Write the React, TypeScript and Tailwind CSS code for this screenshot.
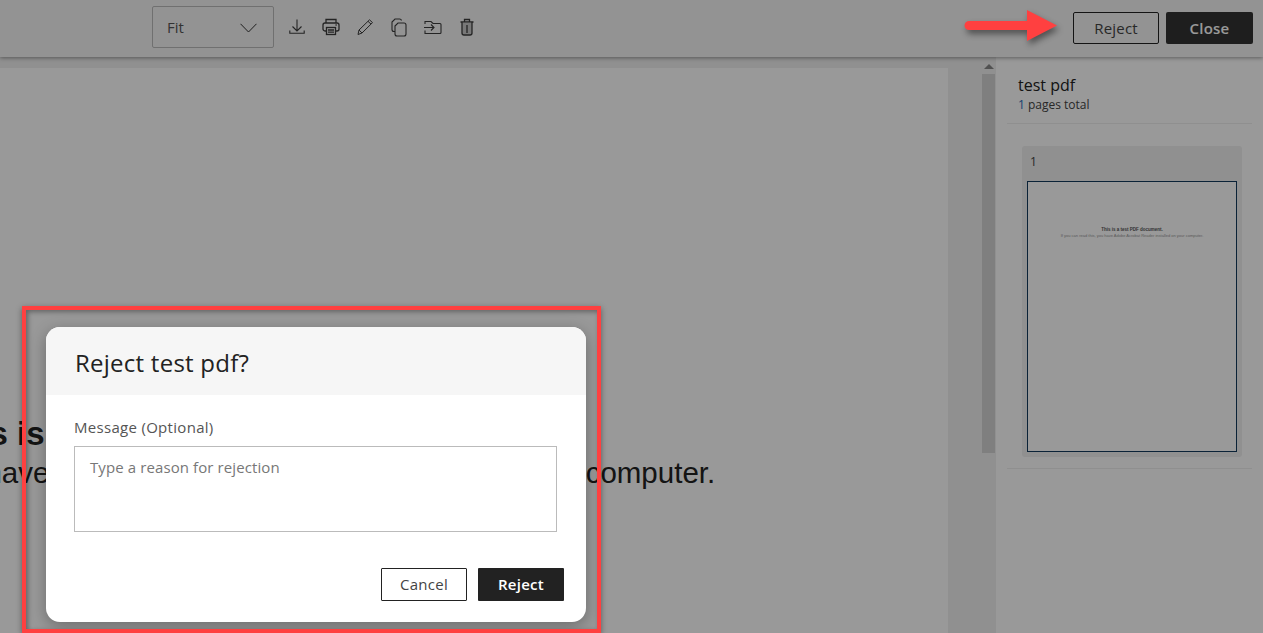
const iconClass = "w-[20px] h-[20px] text-[#3c3c3c]";

const DownloadIcon = () => (
  <svg viewBox="0 0 20 20" fill="none" stroke="currentColor" strokeWidth="1.1" className={iconClass}>
    <path d="M10 2.500v11M5.500 9.500l4.500 4.500 4.500-4.500" />
    <path d="M2.800 13.500v2.800h14.400v-2.800" />
  </svg>
);

const PrintIcon = () => (
  <svg viewBox="0 0 20 20" fill="none" stroke="currentColor" strokeWidth="1.3" className={iconClass}>
    <path d="M5 6V2.500h10V6" />
    <rect x="2" y="6" width="16" height="8" rx="2" />
    <rect x="5.500" y="10.500" width="9" height="7" fill="#f5f5f5" />
    <path d="M7 13h6M7 15.200h6" />
    <path d="M14.500 8h1.200" />
  </svg>
);

const PencilIcon = () => (
  <svg viewBox="0 0 20 20" fill="none" stroke="currentColor" strokeWidth="1" className={iconClass}>
    <path d="M3 17.500l1-4.500L14.500 2.800l3 2.800L7 16z" />
    <path d="M4 13l3 3M13 4.300l3 2.800" />
  </svg>
);

const CopyIcon = () => (
  <svg viewBox="0 0 20 20" fill="none" stroke="currentColor" strokeWidth="1.1" className={iconClass}>
    <path d="M6 14.500H5a2 2 0 0 1-2-2V5l3-3h4.500a2 2 0 0 1 2 1.500" />
    <path d="M6 9l3-3h6a2 2 0 0 1 2 2v9a2 2 0 0 1-2 2H8a2 2 0 0 1-2-2z" />
  </svg>
);

const MoveIcon = () => (
  <svg viewBox="0 0 20 20" fill="none" stroke="currentColor" strokeWidth="1.1" className={iconClass}>
    <path d="M2 7V4.500h6l2 2h7a1 1 0 0 1 1 1v8a1 1 0 0 1-1 1H2v-3" />
    <path d="M1 10.500h10M8 7.500l3 3-3 3" />
  </svg>
);

const TrashIcon = () => (
  <svg viewBox="0 0 20 20" fill="none" stroke="currentColor" strokeWidth="1.3" className={iconClass}>
    <path d="M3.500 5h13M7.500 5V2.500h5V5" />
    <path d="M5 5v11a2 2 0 0 0 2 2h6a2 2 0 0 0 2-2V5" fill="#9b9b9b" fillOpacity="0.5" />
    <path d="M10 8v8" />
  </svg>
);

const Chevron = () => (
  <svg viewBox="0 0 17 10" fill="none" stroke="#333" strokeWidth="1" className="w-[17px] h-[10px]">
    <path d="M0.500 0.800L8.500 9l8-8.200" />
  </svg>
);

const Arrow = () => (
  <svg viewBox="0 0 94 32" className="w-[94px] h-[32px] drop-shadow-[2px_4px_3px_rgba(0,0,0,0.45)]">
    <path d="M6 11h58V0l30 15.500L64 31V20H6a4.500 4.500 0 0 1 0-9z" fill="#ff4040" />
  </svg>
);

export default function App() {
  return (
    <div className="relative h-[633px] w-[1263px] overflow-hidden bg-white font-['Open_Sans','Liberation_Sans',sans-serif] text-[#333]">
      <header className="relative z-10 flex h-[57px] items-center bg-[#f5f5f5] pr-[10px] pb-[3px] pl-[152px] shadow-[0_1px_4px_rgba(0,0,0,0.4)]">
        <div className="flex h-[42px] w-[122px] items-center justify-between rounded-[2px] border border-[#bbb] pr-[16px] pl-[14px] text-[15px] text-[#555]">
          Fit
          <div className="mt-[2px]">
            <Chevron />
          </div>
        </div>
        <div className="ml-[13px] flex items-center gap-[14px]">
          <DownloadIcon />
          <PrintIcon />
          <PencilIcon />
          <CopyIcon />
          <MoveIcon />
          <TrashIcon />
        </div>
        <div className="mt-[2px] ml-auto flex items-center gap-[7px]">
          <button className="h-[32px] w-[86px] rounded-[2px] border border-[#222] text-[15px] font-medium tracking-[0.2px] text-[#444]">Reject</button>
          <button className="h-[32px] w-[87px] rounded-[2px] bg-[#333] text-[15px] font-semibold tracking-[0.2px] text-white">Close</button>
        </div>
      </header>

      <div className="flex h-[576px]">
        <main className="flex w-[996px] bg-[#f0f0f0]">
          <div className="mt-[11px] w-[948px] overflow-hidden bg-white pt-[347px] font-['Liberation_Sans',sans-serif] whitespace-nowrap text-[#222]">
            <div className="ml-[-60px] text-[33px] leading-[38px] font-bold">This is a test PDF document.</div>
            <div className="mt-[3px] ml-[-336px] text-[29.500px] leading-[34px]">If you can read this, you have Adobe Acrobat Reader installed on your computer.</div>
          </div>
          <div className="ml-[34px] flex w-[13px] flex-col items-center">
            <div className="mt-[7px] h-0 w-0 border-x-[5px] border-b-[5px] border-x-transparent border-b-[#888]" />
            <div className="mt-[5px] h-[379px] w-[13px] bg-[#d4d4d4]" />
          </div>
        </main>

        <aside className="flex-1 bg-white pt-[18px]">
          <div className="mx-[11px] border-b border-[#eee] pb-[10px] pl-[11px]">
            <div className="text-[16px] leading-[20px] text-[#222]">test pdf</div>
            <div className="mt-[2px] text-[12px] leading-[16px] text-[#444]">
              <span className="text-[#2a6ebb]">1</span> pages total
            </div>
          </div>
          <div className="mx-[11px] border-b border-[#eee] pt-[22px] pb-[11px] pl-[15px]">
            <div className="w-[220px] rounded-[3px] bg-[#f0f0f0] px-[5px] pb-[5px]">
              <div className="h-[35px] pt-[7px] pl-[3px] text-[12px] text-[#444]">1</div>
              <div className="flex h-[271px] flex-col items-center border border-[#123a5c] bg-white pt-[45px] font-['Liberation_Sans',sans-serif] whitespace-nowrap text-[#999]">
                <div className="text-[4.500px] leading-[5px] font-bold text-[#555]">This is a test PDF document.</div>
                <div className="mt-[1px] text-[4px] leading-[5px]">If you can read this, you have Adobe Acrobat Reader installed on your computer.</div>
              </div>
            </div>
          </div>
        </aside>
      </div>

      {/* dimming layer behind the dialog */}
      <div className="absolute inset-0 z-20 bg-black/40" />

      <div className="absolute top-[327px] left-[46px] z-30 flex h-[295px] w-[540px] flex-col overflow-hidden rounded-[14px] bg-white shadow-[0_4px_16px_rgba(0,0,0,0.3)]">
        <div className="flex h-[68px] items-center bg-[#f6f6f6] pt-[3px] pl-[29px] text-[24px] font-medium tracking-[0.25px] text-[#222]">Reject test pdf?</div>
        <div className="flex-1 pt-[23px] pl-[28px]">
          <div className="text-[15px] leading-[19px] tracking-[0.3px] text-[#555]">Message (Optional)</div>
          <div className="mt-[9px] h-[86px] w-[483px] border border-[#bbb] pt-[10px] pl-[15px] text-[15px] leading-[20px] tracking-[0.1px] text-[#777]">Type a reason for rejection</div>
        </div>
        <div className="flex justify-end gap-[11px] pr-[22px] pb-[21px]">
          <button className="h-[33px] w-[86px] rounded-[1px] border border-[#222] pb-[1px] text-[15px] font-medium tracking-[0.3px] text-[#444]">Cancel</button>
          <button className="h-[33px] w-[86px] rounded-[1px] bg-[#222] pb-[1px] text-[15px] font-semibold tracking-[0.3px] text-white">Reject</button>
        </div>
      </div>

      {/* annotations drawn on the screenshot */}
      <div className="absolute top-[306px] left-[22px] z-40 h-[327px] w-[579px] border-[4px] border-[#ff4040] shadow-[0_2px_6px_rgba(0,0,0,0.4),inset_2px_2px_5px_rgba(0,0,0,0.35)]" />
      <div className="absolute top-[10px] left-[963px] z-40">
        <Arrow />
      </div>
    </div>
  );
}
